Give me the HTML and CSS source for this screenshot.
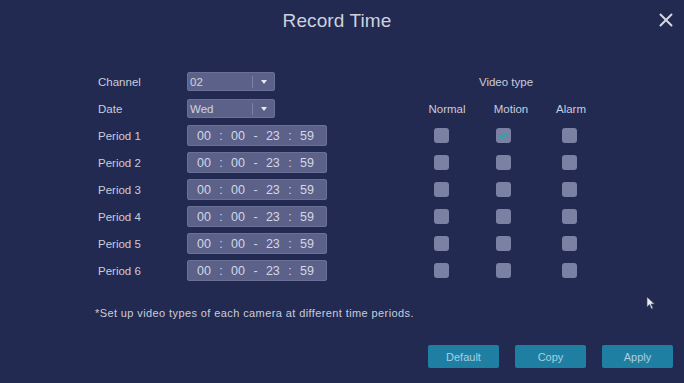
FILE: index.html
```html
<!DOCTYPE html>
<html>
<head>
<meta charset="utf-8">
<link rel="stylesheet" href="styles.css">
</head>
<body>
<div class="dialog">
  <header class="head">
    <span></span>
    <h1 class="title">Record Time</h1>
    <svg class="close" width="14" height="14" viewBox="0 0 14 14"><path d="M1.5 1.5 L12.5 12.5 M12.5 1.5 L1.5 12.5" stroke="#d6d8e2" stroke-width="2" stroke-linecap="round"/></svg>
  </header>

  <div class="form">
    <div class="lbl">Channel</div>
    <div class="select"><span class="val">02</span><span class="sep"></span><span class="arrow"></span></div>
    <div class="gapcell"></div>
    <div class="vt-head">Video type</div>

    <div class="lbl">Date</div>
    <div class="select"><span class="val">Wed</span><span class="sep"></span><span class="arrow"></span></div>
    <div class="gapcell"></div>
    <div class="col-head normal">Normal</div>
    <div class="col-head motion">Motion</div>
    <div class="col-head alarm">Alarm</div>

    <div class="lbl">Period 1</div>
    <div class="period"><span>00</span><span>:</span><span>00</span><span>-</span><span>23</span><span>:</span><span>59</span></div>
    <div class="gapcell"></div>
    <div class="cell"><span class="box"></span></div>
    <div class="cell"><span class="box checked"><svg width="11" height="11" viewBox="0 0 11 11"><path d="M2 5.5 L4.5 8 L9 3" stroke="#2aa6b0" stroke-width="2" fill="none"/></svg></span></div>
    <div class="cell"><span class="box"></span></div>

    <div class="lbl">Period 2</div>
    <div class="period"><span>00</span><span>:</span><span>00</span><span>-</span><span>23</span><span>:</span><span>59</span></div>
    <div class="gapcell"></div>
    <div class="cell"><span class="box"></span></div>
    <div class="cell"><span class="box"></span></div>
    <div class="cell"><span class="box"></span></div>

    <div class="lbl">Period 3</div>
    <div class="period"><span>00</span><span>:</span><span>00</span><span>-</span><span>23</span><span>:</span><span>59</span></div>
    <div class="gapcell"></div>
    <div class="cell"><span class="box"></span></div>
    <div class="cell"><span class="box"></span></div>
    <div class="cell"><span class="box"></span></div>

    <div class="lbl">Period 4</div>
    <div class="period"><span>00</span><span>:</span><span>00</span><span>-</span><span>23</span><span>:</span><span>59</span></div>
    <div class="gapcell"></div>
    <div class="cell"><span class="box"></span></div>
    <div class="cell"><span class="box"></span></div>
    <div class="cell"><span class="box"></span></div>

    <div class="lbl">Period 5</div>
    <div class="period"><span>00</span><span>:</span><span>00</span><span>-</span><span>23</span><span>:</span><span>59</span></div>
    <div class="gapcell"></div>
    <div class="cell"><span class="box"></span></div>
    <div class="cell"><span class="box"></span></div>
    <div class="cell"><span class="box"></span></div>

    <div class="lbl">Period 6</div>
    <div class="period"><span>00</span><span>:</span><span>00</span><span>-</span><span>23</span><span>:</span><span>59</span></div>
    <div class="gapcell"></div>
    <div class="cell"><span class="box"></span></div>
    <div class="cell"><span class="box"></span></div>
    <div class="cell"><span class="box"></span></div>
  </div>

  <p class="note">*Set up video types of each camera at different time periods.</p>

  <div class="actions">
    <button class="btn">Default</button>
    <button class="btn">Copy</button>
    <button class="btn">Apply</button>
  </div>

  <svg class="cursor" width="10" height="14" viewBox="0 0 10 14"><path d="M1 1 L1 11 L3.5 8.5 L5.5 13 L7 12.3 L5 8 L8.5 8 Z" fill="#e8e8f0" stroke="#40465f" stroke-width="0.6"/></svg>
</div>
</body>
</html>
```

FILE: styles.css
```css
* { box-sizing: border-box; }
html, body {
  margin: 0;
  padding: 0;
  width: 684px;
  height: 383px;
  overflow: hidden;
  background: #232a52;
}
.dialog {
  position: relative;
  width: 684px;
  height: 383px;
  font-family: "Liberation Sans", Arial, sans-serif;
  color: #c9ccda;
}
.head {
  height: 42px;
  display: grid;
  grid-template-columns: 1fr auto 1fr;
  align-items: center;
  padding-right: 10px;
}
.title {
  margin: 0;
  font-size: 19px;
  font-weight: normal;
  color: #cfd1dc;
  letter-spacing: 0.1px;
}
.close {
  justify-self: end;
  margin-right: 1px;
  margin-top: -3px;
}
.form {
  margin-top: 26px;
  padding-left: 98px;
  display: grid;
  grid-template-columns: 89px 140px 83px 62px 62px 70px;
  grid-auto-rows: 27px;
  align-items: center;
}
.lbl {
  font-size: 11.5px;
  color: #c9ccda;
}
.select {
  width: 88px;
  height: 19px;
  background: #5b6188;
  border: 1px solid #6a7096;
  border-radius: 2px;
  display: flex;
  align-items: center;
  font-size: 11.5px;
  color: #d0d3e2;
}
.select .val { flex: 1; padding-left: 2px; }
.select .sep {
  width: 1px;
  height: 12px;
  background: #7c82a6;
  margin-right: 8px;
}
.select .arrow {
  width: 0;
  height: 0;
  border-left: 3px solid transparent;
  border-right: 3px solid transparent;
  border-top: 4px solid #e8eaf2;
  margin-right: 7px;
}
.period {
  width: 140px;
  height: 21px;
  background: #5b6188;
  border: 1px solid #6a7096;
  border-radius: 2px;
  display: flex;
  justify-content: space-between;
  align-items: center;
  padding: 0 12px 0 9px;
  font-size: 12.5px;
  color: #d3d6e6;
}
.vt-head {
  grid-column: 4 / span 3;
  text-align: center;
  padding-right: 2px;
  font-size: 11.5px;
  color: #c9ccda;
}
.col-head {
  text-align: center;
  font-size: 11.5px;
  color: #c9ccda;
}
.col-head.normal { padding-left: 12px; }
.col-head.motion { padding-left: 16px; }
.col-head.alarm { padding-left: 4px; }
.cell {
  display: flex;
  justify-content: center;
}
.box {
  width: 15px;
  height: 15px;
  border-radius: 3px;
  background: #7a81a3;
  display: flex;
  align-items: center;
  justify-content: center;
}
.note {
  margin: 22px 0 0 95px;
  font-size: 11px;
  letter-spacing: 0.4px;
  color: #c9ccda;
  line-height: 14px;
}
.actions {
  margin-top: 25px;
  padding-left: 428px;
  display: flex;
  gap: 16px;
}
.btn {
  width: 71px;
  height: 23px;
  border: none;
  border-radius: 2px;
  background: #1f7fa2;
  color: #a9cfe0;
  font-family: "Liberation Sans", Arial, sans-serif;
  font-size: 11px;
  padding: 0;
}
.cursor {
  position: absolute;
  left: 646px;
  top: 296px;
}
```
